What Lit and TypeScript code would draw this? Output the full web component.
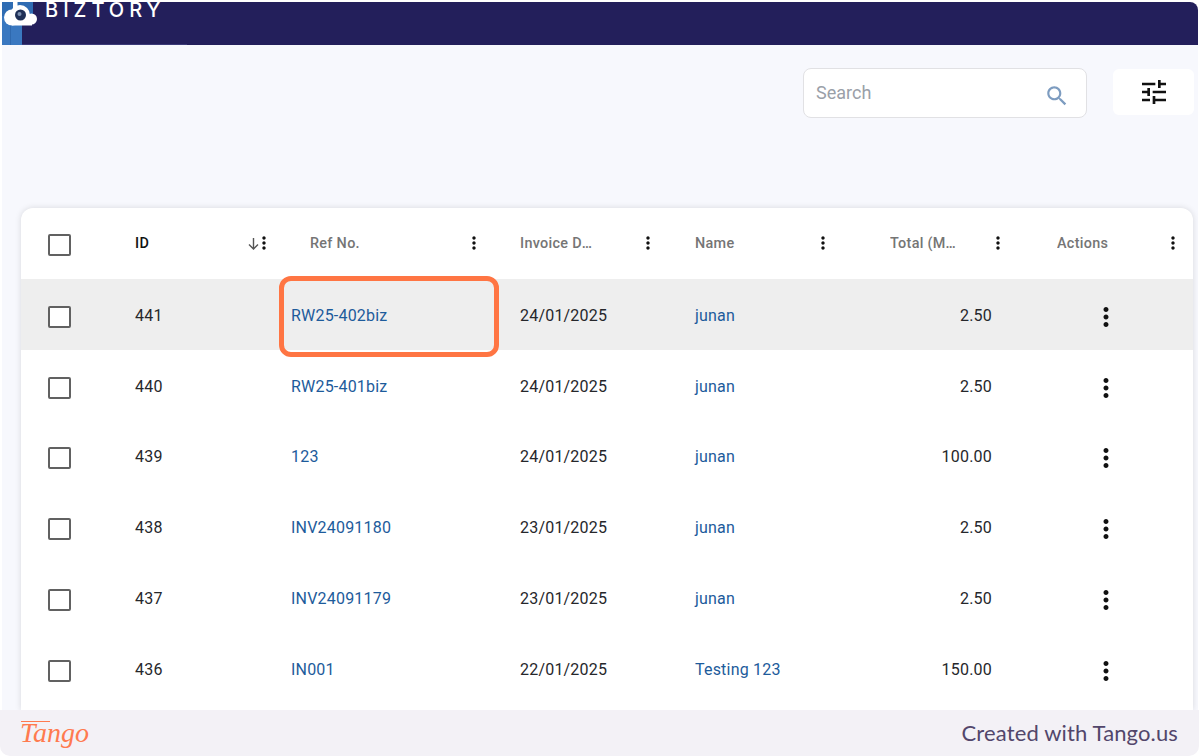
import { LitElement, html, css } from "lit";
import { customElement } from "lit/decorators.js";

type Row = { id: string; ref: string; date: string; name: string; total: string };

const ROWS: Row[] = [
  { id: "441", ref: "RW25-402biz", date: "24/01/2025", name: "junan", total: "2.50" },
  { id: "440", ref: "RW25-401biz", date: "24/01/2025", name: "junan", total: "2.50" },
  { id: "439", ref: "123", date: "24/01/2025", name: "junan", total: "100.00" },
  { id: "438", ref: "INV24091180", date: "23/01/2025", name: "junan", total: "2.50" },
  { id: "437", ref: "INV24091179", date: "23/01/2025", name: "junan", total: "2.50" },
  { id: "436", ref: "IN001", date: "22/01/2025", name: "Testing 123", total: "150.00" },
];

const dots = (cls: string) => html`<svg class=${cls} viewBox="0 0 24 24" aria-hidden="true">
  <path d="M12 8c1.1 0 2-.9 2-2s-.9-2-2-2-2 .9-2 2 .9 2 2 2zm0 2c-1.1 0-2 .9-2 2s.9 2 2 2 2-.9 2-2-.9-2-2-2zm0 6c-1.1 0-2 .9-2 2s.9 2 2 2 2-.9 2-2-.9-2-2-2z"/>
</svg>`;

const box = html`<span class="check"></span>`;

@customElement("app-root")
export class AppRoot extends LitElement {
  static styles = css`
    :host {
      display: flex;
      flex-direction: column;
      height: 756px;
      box-sizing: border-box;
      padding: 2px 2px 0 2px;
      background: #fff;
      overflow: hidden;
      font-family: Roboto, "Liberation Sans", sans-serif;
    }
    .topbar {
      flex: 0 0 43px;
      display: flex;
      align-items: flex-start;
      background: #231f5b;
      border-radius: 2px 8px 0 0;
      position: relative;
    }
    .logo { position: absolute; left: 0; top: 0; width: 40px; height: 43px; }
    .rule { position: absolute; left: 20px; bottom: 0; width: 165px; height: 1px; background: #3b3a78; }
    .brand {
      margin-left: 43px;
      font-family: Inter, Lato, sans-serif;
      font-weight: 500;
      font-size: 20px;
      line-height: 16px;
      letter-spacing: 5px;
      color: #fff;
      position: relative;
    }
    main {
      flex: 1 1 0;
      min-height: 0;
      overflow: hidden;
      background: #f7f8fd;
      padding: 23px 4px 0 19px;
      display: flex;
      flex-direction: column;
    }
    .toolbar {
      display: flex;
      justify-content: flex-end;
      align-items: flex-start;
      gap: 26px;
      height: 50px;
      margin-bottom: 90px;
    }
    .search {
      width: 284px;
      height: 50px;
      box-sizing: border-box;
      background: #fff;
      border: 1px solid #e1e1e4;
      border-radius: 8px;
      display: flex;
      align-items: center;
      padding: 0 16px 0 12px;
      color: #9aa0a8;
      font-size: 18px;
      justify-content: space-between;
    }
    .search span { margin-top: -2px; }
    .search svg { width: 26px; height: 26px; fill: #7d9cc0; margin-top: 5px; }
    .filter {
      width: 81px;
      height: 46px;
      margin-top: 1px;
      background: #fff;
      border-radius: 6px;
      display: flex;
      align-items: center;
      justify-content: center;
    }
    .filter svg { width: 32px; height: 32px; fill: #111; }
    .card {
      background: #fff;
      border-radius: 12px 12px 0 0;
      box-shadow: 0 0 6px rgba(0, 0, 0, 0.13);
      flex: 1 1 0;
      min-height: 0;
      margin-right: 1px;
    }
    .grid {
      display: grid;
      grid-template-columns: 114px 156px 229px 175px 175px 167px 156px;
      align-items: center;
      box-sizing: border-box;
    }
    .head {
      height: 71px;
      padding-bottom: 1px;
      font-size: 14.4px;
      font-weight: 500;
      color: #757575;
      letter-spacing: 0.3px;
    }
    .row {
      height: 70.8px;
      padding-top: 1px;
      font-size: 16px;
      letter-spacing: 0.2px;
      color: #26272b;
    }
    .row.sel { background: #eeeeee; height: 71.2px; }
    .cb { padding-left: 27px; display: flex; }
    .check {
      width: 19px;
      height: 18px;
      border: 2px solid #616161;
      border-radius: 2px;
      background: #fff;
      margin-top: 3px;
    }
    .th { display: flex; align-items: center; min-width: 0; }
    .th .label { flex: 1 1 0; min-width: 0; white-space: nowrap; overflow: hidden; text-overflow: ellipsis; }
    .th svg.menu { width: 20px; height: 20px; flex: none; fill: #111; }
    .th-id { color: #111; padding-right: 17.5px; }
    .th-ref { padding-left: 19px; padding-right: 36px; }
    .th-inv { padding-right: 37px; }
    .th-inv svg.menu { margin-left: 44px; }
    .th-name { padding-right: 37px; }
    .th-total { padding-left: 20px; padding-right: 29px; }
    .th-total svg.menu { margin-left: 32px; }
    .th-act { padding-left: 20px; padding-right: 10px; }
    .sort { width: 15px; height: 15px; fill: none; stroke: #555; stroke-width: 1.4; margin-right: -7px; flex: none; }
    a { color: #1d5b9b; text-decoration: none; }
    .refcell { position: relative; align-self: stretch; display: flex; align-items: center; }
    .callout {
      position: absolute;
      left: -12px;
      right: 21px;
      top: -4px;
      bottom: -7px;
      border: 5px solid #ff7543;
      border-radius: 12px;
      pointer-events: none;
    }
    .num { text-align: right; padding-right: 45px; }
    .acts { display: flex; padding-left: 54px; }
    .acts svg { width: 30px; height: 30px; fill: #111; margin-top: 3px; }
    footer {
      flex: 0 0 46px;
      margin: 0 -1px 0 -2px;
      background: #f3f1f6;
      border-radius: 0 0 10px 10px;
      display: flex;
      align-items: center;
      justify-content: space-between;
      padding: 0 21px 0 20px;
    }
    .tango {
      position: relative;
      font-family: "Liberation Serif", serif;
      font-style: italic;
      font-size: 28px;
      color: #ff7a4f;
      line-height: 1;
    }
    .tango::before {
      content: "";
      position: absolute;
      left: 1px;
      top: 2px;
      width: 29px;
      height: 1px;
      background: #ff7a4f;
    }
    .made {
      font-family: Lato, sans-serif;
      font-size: 22px;
      letter-spacing: 0.13px;
      color: #52466b;
      margin-top: -2px;
    }
  `;

  render() {
    return html`
      <header class="topbar">
        <svg class="logo" viewBox="0 0 40 43" aria-hidden="true">
          <rect x="0" y="0" width="31" height="14" fill="#2f6cb3" />
          <rect x="0" y="14" width="20" height="29" fill="#3a78c0" />
          <rect x="8" y="14" width="1" height="29" fill="#2f69ae" />
          <circle cx="10" cy="15.5" r="8" fill="#fff" />
          <circle cx="29.5" cy="17" r="5.5" fill="#fff" />
          <circle cx="18" cy="13" r="10" fill="#fff" />
          <rect x="10" y="14" width="20" height="9.5" fill="#fff" />
          <rect x="11" y="0" width="4.5" height="10" fill="#fff" />
          <circle cx="18.5" cy="13" r="5.5" fill="#1f3056" />
          <circle cx="17.5" cy="12" r="2" fill="#7d90b0" />
        </svg>
        <span class="rule"></span>
        <span class="brand">BIZTORY</span>
      </header>
      <main>
        <div class="toolbar">
          <div class="search">
            <span>Search</span>
            <svg viewBox="0 0 24 24" aria-hidden="true"><path d="M15.5 14h-.79l-.28-.27C15.41 12.59 16 11.11 16 9.5 16 5.91 13.09 3 9.5 3S3 5.91 3 9.5 5.91 16 9.5 16c1.61 0 3.09-.59 4.23-1.57l.27.28v.79l5 4.99L20.49 19l-4.99-5zm-6 0C7.01 14 5 11.99 5 9.5S7.01 5 9.5 5 14 7.01 14 9.5 11.99 14 9.5 14z"/></svg>
          </div>
          <div class="filter">
            <svg viewBox="0 0 24 24" aria-hidden="true"><path d="M3 17v2h6v-2H3zM3 5v2h10V5H3zm10 16v-2h8v-2h-8v-2h-2v6h2zM7 9v2H3v2h4v2h2V9H7zm14 4v-2H11v2h10zm-6-4h2V7h4V5h-4V3h-2v6z"/></svg>
          </div>
        </div>
        <section class="card">
          <div class="grid head">
            <div class="cb">${box}</div>
            <div class="th th-id">
              <span class="label">ID</span>
              <svg class="sort" viewBox="0 0 15 15" aria-hidden="true"><path d="M7.5 2v11M3 8.5l4.5 4.5L12 8.5" /></svg>
              ${dots("menu")}
            </div>
            <div class="th th-ref"><span class="label">Ref No.</span>${dots("menu")}</div>
            <div class="th th-inv"><span class="label">Invoice Date</span>${dots("menu")}</div>
            <div class="th th-name"><span class="label">Name</span>${dots("menu")}</div>
            <div class="th th-total"><span class="label">Total (MYR)</span>${dots("menu")}</div>
            <div class="th th-act"><span class="label">Actions</span>${dots("menu")}</div>
          </div>
          ${ROWS.map(
            (r, i) => html`
              <div class="grid row ${i === 0 ? "sel" : ""}">
                <div class="cb">${box}</div>
                <div>${r.id}</div>
                <div class="refcell">
                  <a href="#">${r.ref}</a>
                  ${i === 0 ? html`<span class="callout"></span>` : ""}
                </div>
                <div>${r.date}</div>
                <div><a href="#">${r.name}</a></div>
                <div class="num">${r.total}</div>
                <div class="acts">${dots("")}</div>
              </div>
            `
          )}
        </section>
      </main>
      <footer>
        <span class="tango">Tango</span>
        <span class="made">Created with Tango.us</span>
      </footer>
    `;
  }
}
